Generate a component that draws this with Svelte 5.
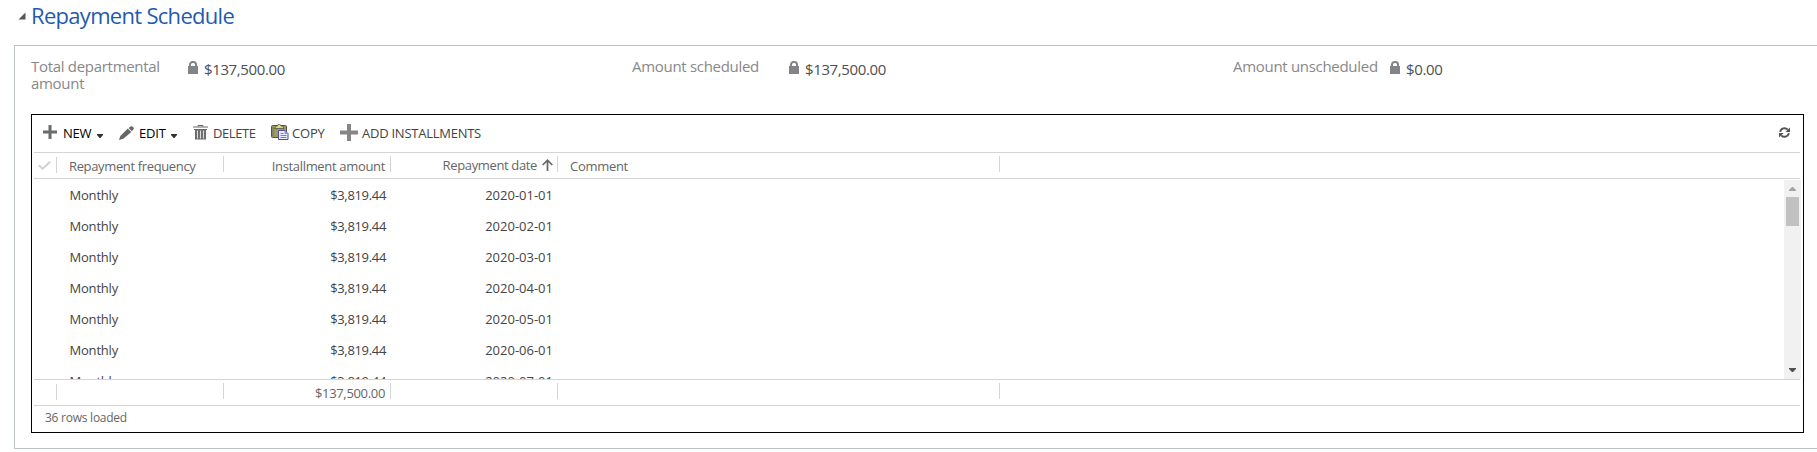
<script>
  const fields = [
    { label: 'Total departmental amount', value: '$137,500.00' },
    { label: 'Amount scheduled', value: '$137,500.00' },
    { label: 'Amount unscheduled', value: '$0.00' }
  ];
  const rows = Array.from({ length: 7 }, (_, i) => ({
    frequency: 'Monthly',
    amount: '$3,819.44',
    date: `2020-0${i + 1}-01`
  }));
</script>

<section class="page">
  <h2>
    <svg class="twisty" width="8" height="8" viewBox="0 0 8 8"><path d="M7.5 0.5V7.5H0.5z" fill="#555" /></svg>
    <span>Repayment Schedule</span>
  </h2>

  <div class="panel">
    <div class="fields">
      {#each fields as f}
        <div class="field">
          <div class="label">{f.label}</div>
          <svg class="lock" width="10" height="13" viewBox="0 0 10 13">
            <path d="M2 6V3.6A2.6 2.6 0 0 1 4.6 1h.8A2.6 2.6 0 0 1 8 3.6V6" fill="none" stroke="#838488" stroke-width="2" />
            <path d="M0 5h10V13H0z" fill="#838488" />
          </svg>
          <div class="value">{f.value}</div>
        </div>
      {/each}
    </div>

    <div class="grid">
      <div class="toolbar">
        <svg class="plus" width="14" height="14" viewBox="0 0 14 14"><path d="M5.5 0h3v5.5H14v3H8.500V14h-3V8.500H0v-3h5.500z" fill="#6b6b6b" /></svg>
        <span class="cmd new">NEW</span>
        <svg class="caret" width="6" height="4" viewBox="0 0 6 4"><path d="M0 0h6v1L3.500 4h-1L0 1z" fill="#333" /></svg>
        <svg class="pencil" width="15" height="14" viewBox="0 0 15 14">
          <path d="M0 14L1.300 9.900L8.800 2.600L12.300 6.100L4.400 12.800z" fill="#666" />
          <path d="M9.600 2L11.500 0.500Q12.500 -.2 13.400 0.500L14.500 1.600Q15.200 2.500 14.300 3.500L12.900 5.300z" fill="#666" />
        </svg>
        <span class="cmd edit">EDIT</span>
        <svg class="caret" width="6" height="4" viewBox="0 0 6 4"><path d="M0 0h6v1L3.500 4h-1L0 1z" fill="#333" /></svg>
        <svg class="trash" width="15" height="15" viewBox="0 0 15 15">
          <path d="M5 1.500V.5h5v1M0 2h15" fill="none" stroke="#666" />
          <path d="M1 4h13v1h-1v9.500H2V5H1z" fill="#6a6a6a" />
          <path d="M4.500 5.500v8M7.500 5.500v8M10.500 5.500v8" stroke="#ddd" stroke-width="1.100" />
        </svg>
        <span class="cmd soft delete">DELETE</span>
        <svg class="copy" width="18" height="16" viewBox="0 0 18 16">
          <path d="M.5 2.500Q.5 1.500 1.500 1.500H14.500Q15.500 1.500 15.500 2.500V13.500H1.500Q.5 13.500.5 12.500z" fill="#9b9a68" stroke="#55553f" />
          <path d="M2 3v9.500" stroke="#77764c" />
          <path d="M3.500 4.500L5 2h1.500Q7 .2 8.200.2T10 2h1.500L13 4.500z" fill="#d7d590" stroke="#55553f" stroke-width=".8" />
          <path d="M7.500 1.300h1.600v1.500H7.500z" fill="#f3ee45" />
          <path d="M7.500 6.500H14l3 3v6H7.500z" fill="#eef0ff" stroke="#4c4db0" />
          <path d="M13.500 6.500V10H17z" fill="#8e90e0" />
          <path d="M9.500 9.500h3M9.500 11.500h6M9.500 13.500h6" stroke="#7779cc" />
        </svg>
        <span class="cmd soft copytext">COPY</span>
        <svg class="bigplus" width="18" height="17" viewBox="0 0 18 17"><path d="M7 0h4v6.500h7v4h-7V17H7v-6.500H0v-4h7z" fill="#868686" /></svg>
        <span class="cmd soft add">ADD INSTALLMENTS</span>
        <svg class="refresh" width="11" height="11" viewBox="0 0 11 11">
          <path d="M1.200 4.800A4.300 4.300 0 0 1 8.700 2.700M9.800 6.200A4.300 4.300 0 0 1 2.300 8.300" fill="none" stroke="#555" stroke-width="1.900" />
          <path d="M11 .5V4.900H6.400zM0 10.500V6.100H4.600z" fill="#555" />
        </svg>
      </div>

      <div class="cols head">
        <div class="c check"><svg width="13" height="9" viewBox="0 0 13 9"><path d="M.8 4.300L4.600 7.800L12.200.7" fill="none" stroke="#d2d2d2" stroke-width="2" /></svg></div>
        <div class="c left"><span class="freq">Repayment frequency</span></div>
        <div class="c right"><span class="inst">Installment amount</span></div>
        <div class="c sorted"><span class="rdate">Repayment date</span><svg width="11" height="12" viewBox="0 0 11 12"><path d="M5.500 12V1.500M.7 6L5.500 1.200L10.300 6" fill="none" stroke="#666" stroke-width="1.700" /></svg></div>
        <div class="c left"><span class="comment">Comment</span></div>
      </div>

      <div class="body">
        <div class="rows">
          {#each rows as r}
            <div class="cols row">
              <div></div>
              <div class="frequency">{r.frequency}</div>
              <div class="right money">{r.amount}</div>
              <div class="right date">{r.date}</div>
            </div>
          {/each}
        </div>
        <div class="scroll">
          <svg width="7" height="4" viewBox="0 0 7 4"><path d="M3 0h1l3 3v1H0V3z" fill="#a3a3a3" /></svg>
          <div class="thumb"></div>
          <svg class="down" width="7" height="4" viewBox="0 0 7 4"><path d="M0 0h7v1L4 4H3L0 1z" fill="#505050" /></svg>
        </div>
      </div>

      <div class="cols foot">
        <div class="c check"></div>
        <div class="c"></div>
        <div class="c right"><span class="total">$137,500.00</span></div>
        <div class="c"></div>
        <div class="c"></div>
      </div>
      <div class="status">36 rows loaded</div>
    </div>
  </div>
</section>

<style>
  :global(body) { background: #fff; overflow: hidden; }
  .page {
    box-sizing: border-box;
    height: 452px;
    padding-left: 14px;
    overflow: hidden;
    font-family: "Open Sans", "Noto Sans", sans-serif;
    font-size: 13px;
    color: #444;
    white-space: nowrap;
  }
  svg { display: block; flex: none; }
  h2 {
    display: flex;
    margin: 0;
    height: 45px;
    font-size: 22px;
    font-weight: 400;
    line-height: 30px;
    color: #1f5bb0;
    letter-spacing: -0.7px;
  }
  .twisty { margin: 12px 5px 0 4px; }
  .panel {
    box-sizing: border-box;
    width: 1830px;
    height: 404px;
    border: 1px solid #bfc4c4;
    padding-left: 16px;
  }
  .fields {
    display: grid;
    grid-template-columns: repeat(3, 601px);
    height: 68px;
    font-size: 15px;
  }
  .field { display: flex; align-items: flex-start; }
  .label {
    width: 156px;
    padding-top: 12px;
    box-sizing: border-box;
    line-height: 17px;
    white-space: normal;
    padding-right: 4px;
    color: #888;
    letter-spacing: -0.3px;
  }
  .lock { margin: 15px 6px 0 1px; }
  .value { padding-top: 14px; line-height: 18px; letter-spacing: -0.37px; color: #505050; }

  .grid {
    box-sizing: border-box;
    width: 1773px;
    height: 319px;
    border: 1px solid #000;
    padding: 0 3px 0 2px;
  }
  .toolbar {
    display: flex;
    height: 37px;
    border-bottom: 1px solid #d4d4d4;
  }
  .cmd { line-height: 18px; margin-top: 9px; color: #000; flex: none; letter-spacing: -0.2px; }
  .cmd.soft { color: #444; }
  .plus { margin: 10px 6px 0 9px; }
  .caret { margin-top: 19px; }
  .new { width: 34px; }
  .pencil { margin: 11px 5px 0 16px; }
  .edit { width: 32px; }
  .trash { margin: 10px 5px 0 16px; }
  .cmd.delete { width: 58px; letter-spacing: -0.4px; }
  .copy { margin: 9px 3px 0 0; }
  .copytext { width: 48px; }
  .bigplus { margin: 9px 4px 0 0; }
  .cmd.add { letter-spacing: -0.25px; }
  .refresh { margin: 12px 10px 0 auto; }

  .cols {
    display: grid;
    grid-template-columns: 23px 167px 167px 167px 442px 1fr;
  }
  .c {
    box-sizing: border-box;
    height: 16px;
    margin-top: 3px;
    line-height: 20px;
    border-right: 1px solid #d4d4d4;
  }
  .c.check { margin-top: 4px; }
  .head, .foot { height: 25px; border-bottom: 1px solid #d4d4d4; color: #666; }
  .check svg { margin: 4px 0 0 4px; }
  .left { padding-left: 12px; }
  .right { display: flex; justify-content: flex-end; padding-right: 5px; }
  .sorted { display: flex; justify-content: flex-end; padding-right: 4px; line-height: 18px; }
  .sorted svg { margin: 3px 0 0 5px; }
  .freq, .rdate { letter-spacing: -0.36px; }
  .inst { letter-spacing: -0.33px; }
  .comment { letter-spacing: -0.3px; }
  .frequency { padding-left: 12.5px; letter-spacing: -0.2px; }

  .body { display: flex; height: 200px; margin-right: -1px; }
  .rows { flex: 1; overflow: hidden; height: 200px; }
  .row { height: 31px; line-height: 32px; }
  .money, .total { letter-spacing: -0.33px; }
  .scroll {
    display: flex;
    flex-direction: column;
    align-items: center;
    box-sizing: border-box;
    width: 17px;
    margin-top: 1px;
    padding: 7px 0;
    background: #f1f1f1;
  }
  .thumb { width: 13px; height: 29px; margin-top: 6px; background: #c1c1c1; }
  .down { margin-top: auto; }
  .foot { border-top: 1px solid #d4d4d4; }
  .status { padding-left: 11px; font-size: 12px; line-height: 24px; letter-spacing: -0.25px; color: #666; }
</style>
